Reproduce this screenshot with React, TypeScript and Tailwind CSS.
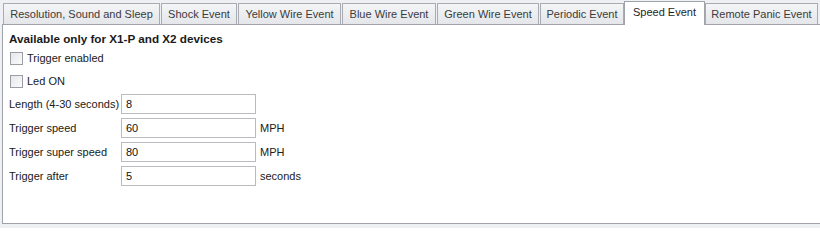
const TABS = [
  { label: "Resolution, Sound and Sleep", cls: "ml-[3px] w-[157px]" },
  { label: "Shock Event", cls: "ml-px w-[76px]" },
  { label: "Yellow Wire Event", cls: "ml-px w-[103px]" },
  { label: "Blue Wire Event", cls: "ml-px w-[94px]" },
  { label: "Green Wire Event", cls: "ml-px w-[102px]" },
  { label: "Periodic Event", cls: "ml-px w-[84px]" },
  { label: "Speed Event", cls: "w-[81px]", active: true },
  { label: "Remote Panic Event", cls: "w-[113px]" },
]

const FIELDS = [
  { label: "Length (4-30 seconds)", value: "8", unit: "" },
  { label: "Trigger speed", value: "60", unit: "MPH" },
  { label: "Trigger super speed", value: "80", unit: "MPH" },
  { label: "Trigger after", value: "5", unit: "seconds" },
]

function Tab({ label, cls, active }: { label: string; cls: string; active?: boolean }) {
  if (active) {
    return (
      <div
        className={`${cls} relative z-10 -mb-px flex h-[24px] items-center justify-center border border-b-0 border-[#a0a3aa] bg-white pb-[2px] text-[#1e1e1e]`}
      >
        {label}
      </div>
    )
  }
  return (
    <div
      className={`${cls} flex h-[21px] items-center justify-center border border-b-0 border-[#a8abb2] bg-gradient-to-b from-[#f4f5f7] to-[#e4e6ea] text-[#3b3b3b]`}
    >
      {label}
    </div>
  )
}

function Checkbox({ label }: { label: string }) {
  return (
    <label className="flex h-[23px] items-center gap-[4px] pl-[7px]">
      <span className="h-[13px] w-[13px] border border-[#9a9da3] bg-gradient-to-br from-[#e6e7ea] to-[#fbfbfc]" />
      <span>{label}</span>
    </label>
  )
}

export default function App() {
  return (
    <div
      className="h-[228px] w-[820px] overflow-hidden bg-[#eef0f3] text-[11px] text-[#202020]"
      style={{ fontFamily: "Tahoma, 'Liberation Sans', Arial, sans-serif" }}
    >
      <div className="flex h-[24px] items-end">
        {TABS.map((t) => (
          <Tab key={t.label} {...t} />
        ))}
      </div>
      <div className="ml-[2px] h-[200px] border border-r-0 border-[#a0a3aa] bg-white">
        <div className="flex flex-col pt-[5px]">
          <div className="h-[17px] pl-[6px] text-[11.7px] font-bold leading-[17px] text-[#1a1a1a]">
            Available only for X1-P and X2 devices
          </div>
          <Checkbox label="Trigger enabled" />
          <Checkbox label="Led ON" />
          <div className="mt-px flex flex-col gap-[4px]">
            {FIELDS.map((f) => (
              <div key={f.label} className="flex h-[20px] items-center">
                <span className="w-[118px] pl-[6px]">{f.label}</span>
                <div className="flex h-[20px] w-[135px] items-center border border-[#b9bbbf] bg-white pl-[4px] text-[#111]">
                  {f.value}
                </div>
                <span className="pl-[4px]">{f.unit}</span>
              </div>
            ))}
          </div>
        </div>
      </div>
    </div>
  )
}
